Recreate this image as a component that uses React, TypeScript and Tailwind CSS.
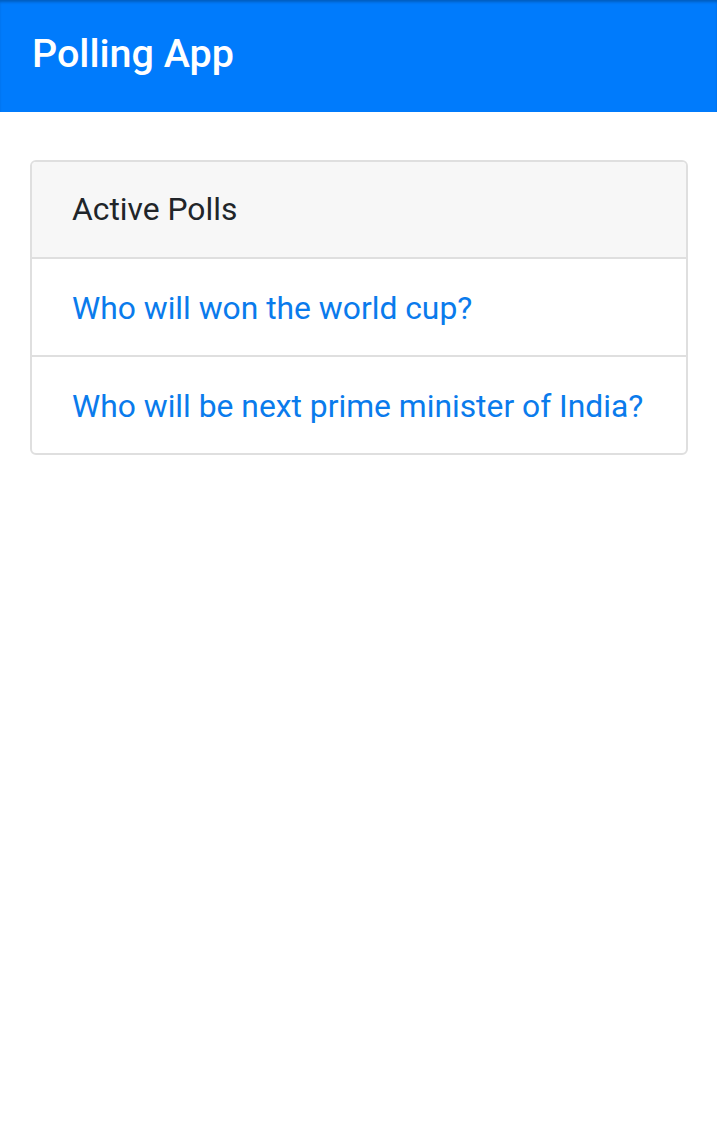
import React from 'react';

const polls = [
  'Who will won the world cup?',
  'Who will be next prime minister of India?',
];

export default function App() {
  return (
    <div className="min-h-[1130px] bg-white" style={{ fontFamily: 'Roboto, "Noto Sans", sans-serif' }}>
      <header className="h-[112px] bg-[#007bfc] flex items-center px-8 shadow-[inset_0_3px_3px_-1px_rgba(0,0,0,0.25)]">
        <h1 className="text-white text-[39.5px] font-medium leading-none -mt-1">Polling App</h1>
      </header>

      <main className="pl-[30px] pr-[29px] pt-[48px]">
        <div className="border-2 border-[#dfdfdf] rounded-[6px] overflow-hidden">
          <div className="h-[97px] bg-[#f7f7f7] flex items-center px-[40px] border-b-2 border-[#dfdfdf]">
            <span className="text-[31.8px] text-[#212529]">Active Polls</span>
          </div>
          {polls.map((q, i) => (
            <div
              key={q}
              className={
                'flex items-center px-[40px] pt-[3px] ' +
                (i < polls.length - 1 ? 'h-[98px] border-b-2 border-[#dfdfdf]' : 'h-[96px]')
              }
            >
              <a href="#" className="text-[31.8px] text-[#0a7bec]">{q}</a>
            </div>
          ))}
        </div>
      </main>
    </div>
  );
}
